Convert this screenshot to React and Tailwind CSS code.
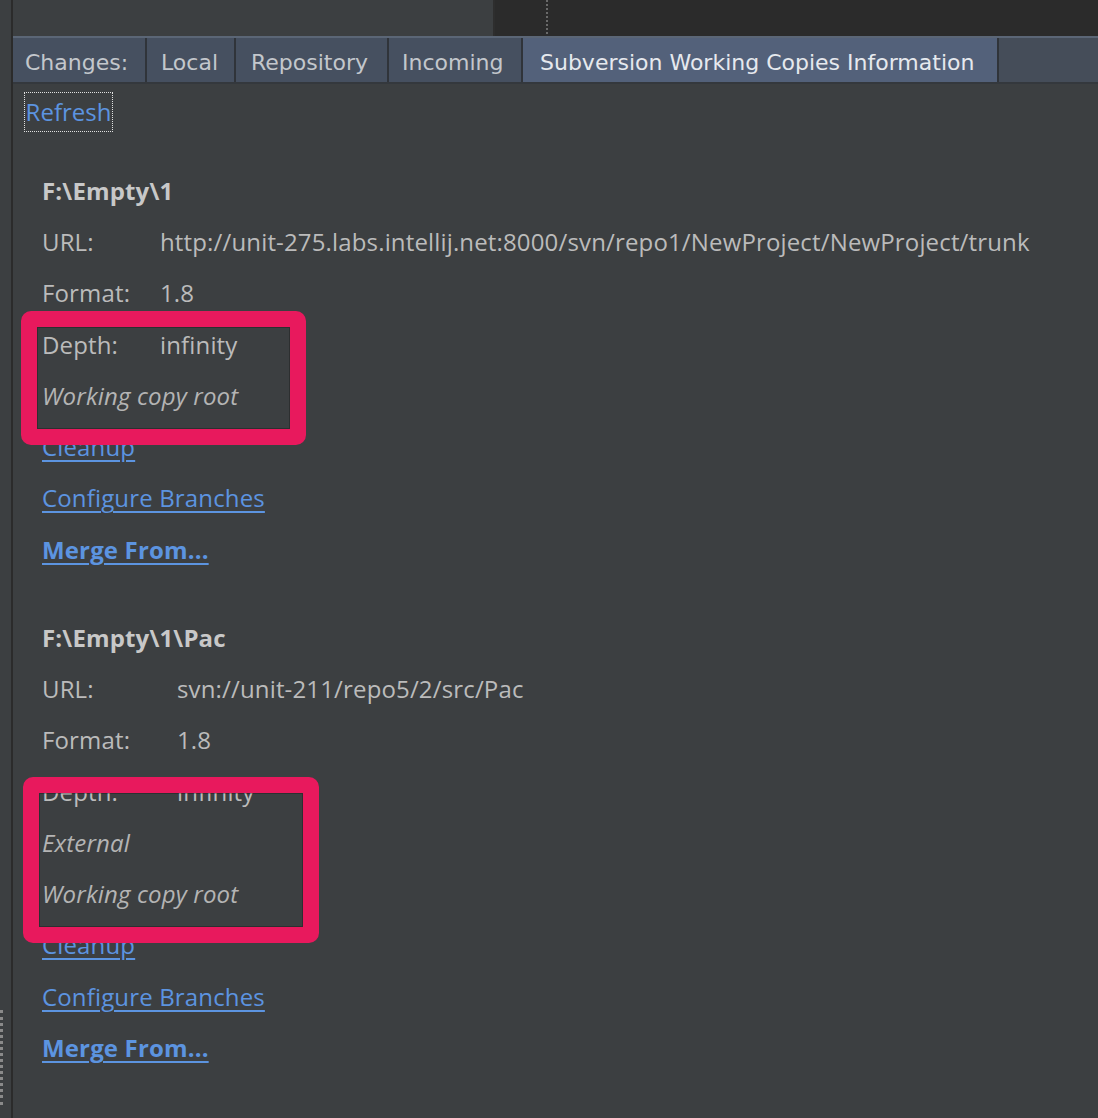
import React from "react";

const contentFont = { fontFamily: "'Open Sans', Lato, sans-serif" };

function Row({ children, className = "" }) {
  return (
    <div className={"h-[51.3px] flex items-center whitespace-nowrap " + className}>
      {children}
    </div>
  );
}

function Field({ label, value, labelW }) {
  return (
    <Row>
      <span className={"text-[#bbbbbb] " + labelW}>{label}</span>
      <span className="text-[#bbbbbb]">{value}</span>
    </Row>
  );
}

function Link({ children, bold }) {
  return (
    <Row>
      <span
        className={
          "text-[#5c94e0] underline underline-offset-[4px] decoration-[1.5px] " +
          (bold ? "font-bold" : "")
        }
      >
        {children}
      </span>
    </Row>
  );
}

function Section({ path, url, labelW, extras }) {
  return (
    <div className="flex flex-col">
      <Row>
        <span className="font-bold text-[#c8c8c8]">{path}</span>
      </Row>
      <Field label="URL:" value={url} labelW={labelW} />
      <Field label="Format:" value="1.8" labelW={labelW} />
      <Field label="Depth:" value="infinity" labelW={labelW} />
      {extras.map((e) => (
        <Row key={e}>
          <span className="italic text-[#b4b4b4]">{e}</span>
        </Row>
      ))}
      <Link>Cleanup</Link>
      <Link>Configure Branches</Link>
      <Link bold>Merge From...</Link>
    </div>
  );
}

function Tab({ children, active, className = "" }) {
  return (
    <div
      className={
        "h-full flex items-center pt-[5px] border-r-2 border-[#30343a] " +
        (active ? "bg-[#53617a] text-[#e6e9ee] " : "bg-[#465060] text-[#c3c7cc] ") +
        className
      }
    >
      {children}
    </div>
  );
}

export default function App() {
  return (
    <div className="relative w-[1098px] h-[1118px] bg-[#3c3f41] flex overflow-hidden">
      {/* left strip */}
      <div className="relative w-[13px] shrink-0 bg-[#3c3f41] border-r-2 border-[#2b2b2b]">
        <div className="absolute left-0 top-[1010px] h-[95px] w-[3px] border-l-[3px] border-dotted border-[#8a8a8a]" />
      </div>

      {/* main */}
      <div className="flex-1 flex flex-col min-w-0">
        {/* top bar */}
        <div className="h-[36px] flex shrink-0">
          <div className="w-[482px] bg-[#3c3f41] border-r-2 border-[#2e2e2e]" />
          <div className="flex-1 bg-[#2b2b2b] flex">
            <div className="ml-[51px] w-0 h-[34px] border-l-[2px] border-dotted border-[#6a6a6a]" />
          </div>
        </div>

        {/* tab bar */}
        <div
          className="h-[48px] shrink-0 flex bg-[#454d59] border-t-2 border-[#5b6676] border-b-2 border-b-[#34383d] text-[22px]"
          style={{ fontFamily: "'DejaVu Sans', Verdana, sans-serif" }}
        >
          <Tab className="pl-[12px] w-[134px]">Changes:</Tab>
          <Tab className="pl-[14px] w-[89px]">Local</Tab>
          <Tab className="pl-[15px] w-[153px]">Repository</Tab>
          <Tab className="pl-[13px] w-[134px]">Incoming</Tab>
          <Tab active className="pl-[17px] w-[476px]">
            Subversion Working Copies Information
          </Tab>
        </div>

        {/* content */}
        <div className="flex-1 text-[24px] tracking-[0.15px]" style={contentFont}>
          <div className="ml-[11px] mt-[8px] h-[40px] w-[89px] border border-dotted border-[#e0e0e0] flex items-center justify-center">
            <span className="text-[#5c94e0] tracking-normal">Refresh</span>
          </div>
          <div className="pl-[29px] mt-[33px]">
            <Section
              path="F:\Empty\1"
              url="http://unit-275.labs.intellij.net:8000/svn/repo1/NewProject/NewProject/trunk"
              labelW="w-[118px]"
              extras={["Working copy root"]}
            />
            <div className="h-[36.6px]" />
            <Section
              path="F:\Empty\1\Pac"
              url="svn://unit-211/repo5/2/src/Pac"
              labelW="w-[135px]"
              extras={["External", "Working copy root"]}
            />
          </div>
        </div>
      </div>

      {/* highlight boxes (annotation overlays) */}
      <div className="absolute left-[21px] top-[311px] w-[285px] h-[134px] border-[16px] border-[#e8195d] rounded-[10px] shadow-[inset_0_0_0_1px_rgba(0,0,0,0.25)]" />
      <div className="absolute left-[23px] top-[777px] w-[296px] h-[166px] border-[16px] border-[#e8195d] rounded-[10px] shadow-[inset_0_0_0_1px_rgba(0,0,0,0.25)]" />
    </div>
  );
}
